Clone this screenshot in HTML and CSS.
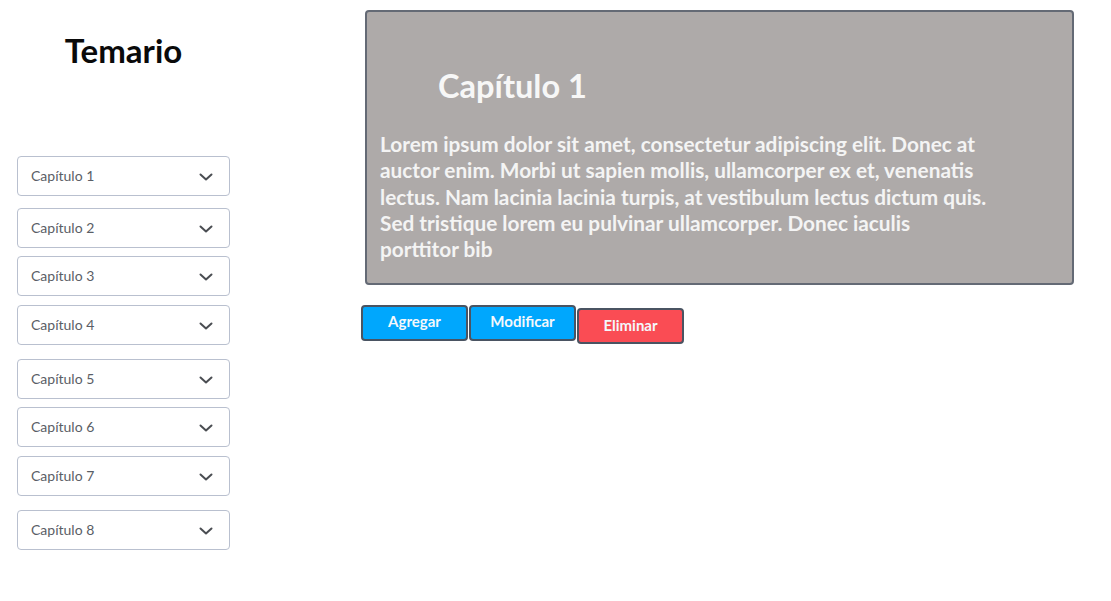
FILE: index.html
```html
<!DOCTYPE html>
<html lang="es">
<head>
<meta charset="utf-8">
<title>Temario</title>
<link rel="stylesheet" href="styles.css">
</head>
<body>
<div class="page">
  <aside class="sidebar">
    <h1 class="title">Temario</h1>
    <div class="chapters">
      <div class="select">Capítulo 1<svg class="chev" viewBox="0 0 14 8"><path d="M1.5 1.5 L7 6.5 L12.5 1.5"/></svg></div>
      <div class="select gap-lg">Capítulo 2<svg class="chev" viewBox="0 0 14 8"><path d="M1.5 1.5 L7 6.5 L12.5 1.5"/></svg></div>
      <div class="select">Capítulo 3<svg class="chev" viewBox="0 0 14 8"><path d="M1.5 1.5 L7 6.5 L12.5 1.5"/></svg></div>
      <div class="select gap-md">Capítulo 4<svg class="chev" viewBox="0 0 14 8"><path d="M1.5 1.5 L7 6.5 L12.5 1.5"/></svg></div>
      <div class="select gap-xl">Capítulo 5<svg class="chev" viewBox="0 0 14 8"><path d="M1.5 1.5 L7 6.5 L12.5 1.5"/></svg></div>
      <div class="select">Capítulo 6<svg class="chev" viewBox="0 0 14 8"><path d="M1.5 1.5 L7 6.5 L12.5 1.5"/></svg></div>
      <div class="select gap-md">Capítulo 7<svg class="chev" viewBox="0 0 14 8"><path d="M1.5 1.5 L7 6.5 L12.5 1.5"/></svg></div>
      <div class="select gap-xl">Capítulo 8<svg class="chev" viewBox="0 0 14 8"><path d="M1.5 1.5 L7 6.5 L12.5 1.5"/></svg></div>
    </div>
  </aside>
  <main class="main">
    <section class="card">
      <h2 class="card-title">Capítulo 1</h2>
      <p class="card-text">Lorem ipsum dolor sit amet, consectetur adipiscing elit. Donec at auctor enim. Morbi ut sapien mollis, ullamcorper ex et, venenatis lectus. Nam lacinia lacinia turpis, at vestibulum lectus dictum quis. Sed tristique lorem eu pulvinar ullamcorper. Donec iaculis porttitor bib</p>
    </section>
    <div class="actions">
      <button class="btn btn-blue">Agregar</button>
      <button class="btn btn-blue">Modificar</button>
      <button class="btn btn-red btn-low">Eliminar</button>
    </div>
  </main>
</div>
</body>
</html>
```

FILE: styles.css
```css
* { box-sizing: border-box; }
html, body { margin: 0; padding: 0; background: #fff; }
body { font-family: Lato, "Open Sans", sans-serif; color: #111; }

.page {
  display: flex;
  align-items: flex-start;
}

.sidebar {
  width: 213px;
  margin-left: 17px;
  display: flex;
  flex-direction: column;
}

.title {
  margin: 30px 0 0;
  text-align: center;
  font-size: 33px;
  line-height: 40px;
  font-weight: 700;
  color: #0a0a0a;
}

.chapters {
  margin-top: 86px;
  display: flex;
  flex-direction: column;
  gap: 8px;
}

.select {
  height: 40px;
  border: 1px solid #b9c0cf;
  border-radius: 4px;
  display: flex;
  align-items: center;
  justify-content: space-between;
  padding: 0 16px 1px 13px;
  font-size: 14px;
  color: #5a5e66;
  background: #fff;
}
.select.gap-md { margin-top: 1px; }
.select.gap-lg { margin-top: 4px; }
.select.gap-xl { margin-top: 6px; }

.chev {
  width: 14px;
  height: 8px;
  margin-top: 2px;
  fill: none;
  stroke: #4a4d52;
  stroke-width: 2;
  stroke-linecap: round;
  stroke-linejoin: round;
}

.main {
  margin-left: 131px;
  padding-top: 10px;
  display: flex;
  flex-direction: column;
}

.card {
  margin-left: 4px;
  width: 709px;
  height: 275px;
  background: #aeaaa9;
  border: 2px solid #646a75;
  border-radius: 4px;
  padding: 54px 20px 0 13px;
}

.card-title {
  margin: 0 0 0 58px;
  font-size: 32.6px;
  line-height: 40px;
  font-weight: 700;
  color: #f7f7f7;
}

.card-text {
  margin: 25px 0 0;
  width: 609px;
  font-size: 20.8px;
  line-height: 26.3px;
  font-weight: 700;
  color: #f4f4f4;
}

.actions {
  margin-top: 20px;
  display: flex;
  align-items: flex-start;
  gap: 1px;
}

.btn {
  width: 107px;
  height: 36px;
  border: 2px solid #4a5462;
  border-radius: 4px;
  font-family: Lato, "Open Sans", sans-serif;
  font-size: 15px;
  font-weight: 700;
  color: #f4f8fb;
  padding: 0 0 4px;
  cursor: pointer;
}
.btn-blue { background: #00a7fd; }
.btn-red { background: #fa4c54; }
.btn-low { margin-top: 3px; padding: 0 0 3px; }
```
